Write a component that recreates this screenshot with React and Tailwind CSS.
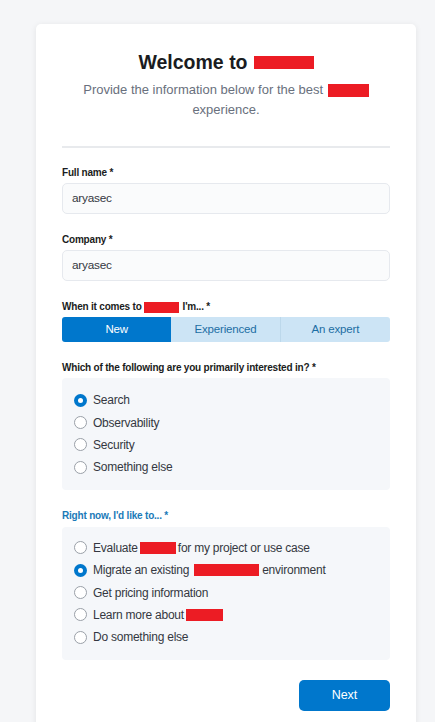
const Redact = ({ w, h = 12, className = "" }) => (
  <span
    className={`inline-block bg-[#ec1c24] align-middle ${className}`}
    style={{ width: w, height: h }}
  />
);

function Radio({ checked, children }) {
  return (
    <label className="flex items-center h-[22.4px] gap-[6px] text-[12px] tracking-[-0.02em] text-[#343741]">
      {checked ? (
        <span className="w-[13px] h-[13px] rounded-full bg-[#0077cc] flex items-center justify-center shrink-0">
          <span className="w-[5px] h-[5px] rounded-full bg-white" />
        </span>
      ) : (
        <span className="w-[13px] h-[13px] rounded-full border border-[#9aa0a8] bg-white shrink-0" />
      )}
      <span className="flex items-center gap-[2px]">{children}</span>
    </label>
  );
}

function Field({ label, value }) {
  return (
    <div className="flex flex-col">
      <div className="text-[10px] tracking-[-0.02em] leading-4 font-bold text-[#1a1c21]">{label}</div>
      <div className="mt-[2px] h-[31px] rounded-[5px] border border-[#e6e9ee] bg-[#fafbfc] flex items-center px-[9px] text-[11.8px] tracking-[-0.02em] text-[#343741]">
        {value}
      </div>
    </div>
  );
}

export default function App() {
  return (
    <div className="min-h-[722px] bg-[#f5f6f8] pt-[24px] pl-[36px] pr-[19px] pb-4 font-['Liberation_Sans',Arial,sans-serif]">
      <div className="bg-white rounded-[5px] shadow-[0_1px_6px_rgba(0,0,0,0.08)] px-[26px] pt-[24px] pb-8">
        <div className="text-center">
          <h1 className="text-[19.5px] leading-7 font-bold text-[#1a1c21] flex items-center justify-center gap-[6px]">
            Welcome to <Redact w={60} h={13} />
          </h1>
          <p className="mt-1 text-[13px] leading-5 text-[#69707d]">
            Provide the information below for the best <Redact w={41} h={13} className="ml-[1px]" />
            <br />
            experience.
          </p>
        </div>

        <div className="mt-[26px] h-[2px] bg-[#e8eaed]" />

        <div className="mt-[17px] flex flex-col gap-[18px]">
          <Field label="Full name *" value="aryasec" />
          <Field label="Company *" value="aryasec" />

          <div className="flex flex-col">
            <div className="text-[10px] tracking-[-0.02em] leading-4 font-bold text-[#1a1c21] flex items-center gap-[2px]">
              <span>When it comes to</span>
              <Redact w={35} h={11} />
              <span className="ml-[2px]">I'm... *</span>
            </div>
            <div className="mt-[2px] grid grid-cols-3 h-[25px] rounded-[3px] overflow-hidden text-[11.5px] tracking-[-0.015em]">
              <div className="bg-[#0077cc] text-white flex items-center justify-center">New</div>
              <div className="bg-[#cce4f5] text-[#1c6ea4] flex items-center justify-center border-r border-[#bcd8eb]">
                Experienced
              </div>
              <div className="bg-[#cce4f5] text-[#1c6ea4] flex items-center justify-center">An expert</div>
            </div>
          </div>

          <div className="flex flex-col">
            <div className="text-[10px] tracking-[-0.02em] leading-4 font-bold text-[#1a1c21]">
              Which of the following are you primarily interested in? *
            </div>
            <div className="mt-[2px] bg-[#f5f7fa] rounded-[4px] px-[12px] pt-[11px] pb-[11px]">
              <Radio checked>Search</Radio>
              <Radio>Observability</Radio>
              <Radio>Security</Radio>
              <Radio>Something else</Radio>
            </div>
          </div>

          <div className="flex flex-col">
            <div className="text-[10px] tracking-[-0.02em] leading-4 font-bold text-[#1a7ab8]">
              Right now, I'd like to... *
            </div>
            <div className="mt-[3px] bg-[#f5f7fa] rounded-[4px] px-[12px] pt-[10px] pb-[11px]">
              <Radio>
                <span>Evaluate</span>
                <Redact w={36} />
                <span>for my project or use case</span>
              </Radio>
              <Radio checked>
                <span>Migrate an existing</span>
                <Redact w={65} className="ml-[3px]" />
                <span className="ml-[1px]">environment</span>
              </Radio>
              <Radio>Get pricing information</Radio>
              <Radio>
                <span>Learn more about</span>
                <Redact w={37} />
              </Radio>
              <Radio>Do something else</Radio>
            </div>
          </div>
        </div>

        <div className="mt-[20px] flex justify-end">
          <button className="w-[91px] h-[31px] rounded-[5px] bg-[#0077cc] text-white text-[12.5px]">Next</button>
        </div>
      </div>
    </div>
  );
}
